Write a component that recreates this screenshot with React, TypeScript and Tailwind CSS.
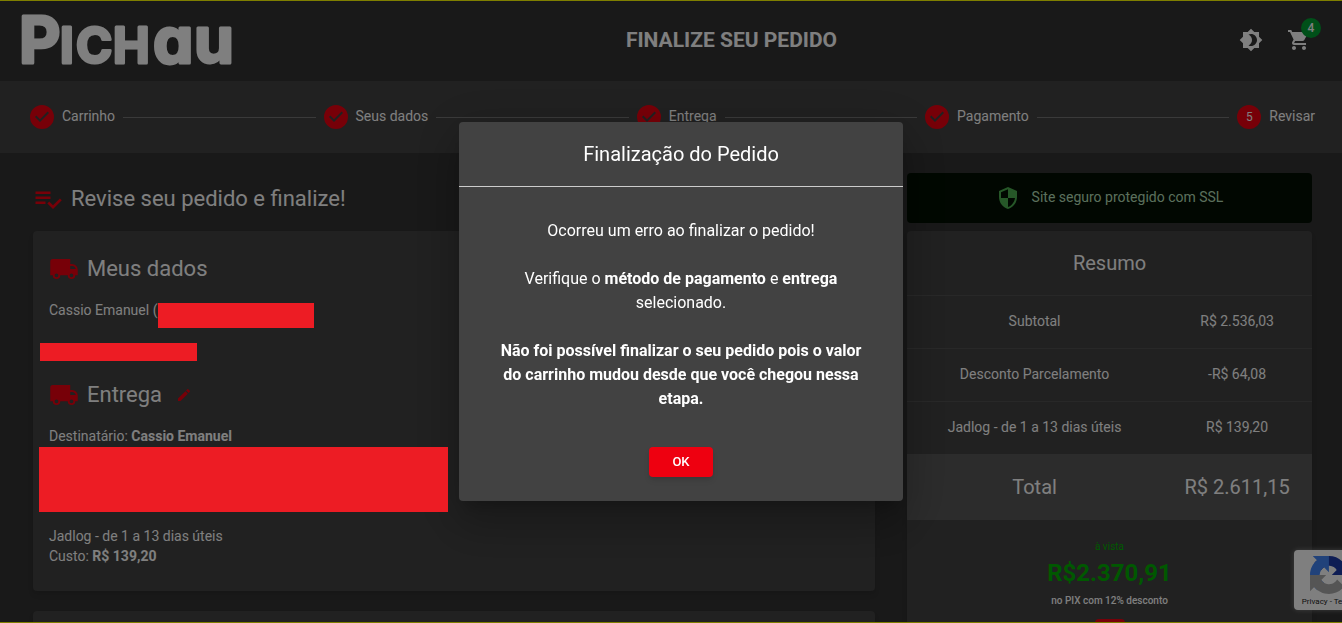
import React, { useState } from 'react';
import { MdBrightness4, MdEdit, MdSecurity, MdShoppingCart } from 'react-icons/md';

const steps = ['Carrinho', 'Seus dados', 'Entrega', 'Pagamento', 'Revisar'];

const summary = [
  { label: 'Subtotal', value: 'R$ 2.536,03' },
  { label: 'Desconto Parcelamento', value: '-R$ 64,08' },
  { label: 'Jadlog - de 1 a 13 dias úteis', value: 'R$ 139,20' },
];

function Logo() {
  return (
    <svg
      className="h-[84px] w-[220px]"
      viewBox="0 0 220 84"
      fill="#fff"
      stroke="#fff"
      strokeWidth="3"
      strokeLinejoin="round"
      style={{ fontFamily: 'Inter', fontWeight: 650, fontFeatureSettings: '"cv11"' }}
      role="img"
      aria-label="Pichau"
    >
      <text y="65">
        <tspan x="3" fontSize="64">P</tspan>
        <tspan x="44 60 97" fontSize="49">ICH</tspan>
        <tspan x="137 178" fontSize="64">au</tspan>
      </text>
    </svg>
  );
}

function StepCheck() {
  return (
    <svg className="w-6 h-6 text-[#ee0010]" viewBox="0 0 24 24" fill="currentColor" aria-hidden="true">
      <path d="M12 0a12 12 0 1 0 0 24 12 12 0 0 0 0-24zm-2 17l-5-5 1.4-1.4 3.6 3.6 7.6-7.6L19 8l-9 9z" />
    </svg>
  );
}

function ListCheck() {
  return (
    <svg className="w-[30px] h-[30px] text-[#ee0010]" viewBox="0 0 24 24" fill="currentColor" aria-hidden="true">
      <path d="M14 10H2v2h12v-2zm0-4H2v2h12V6zM2 16h8v-2H2v2zm19.5-4.5L23 13l-6.99 7-4.51-4.5L13 14l3.01 3 5.49-5.5z" />
    </svg>
  );
}

function Truck() {
  return (
    <svg className="w-[30px] h-[30px] text-[#ee0010]" viewBox="0 0 24 24" fill="currentColor" fillRule="evenodd" aria-hidden="true">
      <path d="M3 4h14v4h1.5A4.5 4.5 0 0 1 23 12.5V17h-2a3 3 0 0 1-6 0H9a3 3 0 0 1-6 0H1V6a2 2 0 0 1 2-2zm14 5.5V12h4.4a3.2 3.2 0 0 0-2.9-2.5H17zM6 15.5a1.5 1.5 0 1 0 0 3 1.5 1.5 0 0 0 0-3zm12 0a1.5 1.5 0 1 0 0 3 1.5 1.5 0 0 0 0-3z" />
    </svg>
  );
}

function CaptchaLogo() {
  return (
    <svg className="w-[38px] h-[38px]" viewBox="0 0 64 64" aria-hidden="true">
      <path fill="#1c3aa9" d="M64 31.955l-.033-1.37V4.687l-7.16 7.16C50.948 4.674 42.033.093 32.05.093c-10.4 0-19.622 4.96-25.458 12.64l11.736 11.86a15.55 15.55 0 0 1 4.754-5.334c2.05-1.6 4.952-2.906 8.968-2.906.485 0 .86.057 1.135.163 4.976.393 9.288 3.14 11.828 7.124l-8.307 8.307L64 31.953" />
      <path fill="#4285f4" d="M31.862.094l-1.37.033H4.594l7.16 7.16C4.58 13.147 0 22.06 0 32.046c0 10.4 4.96 19.622 12.64 25.458L24.5 45.768a15.55 15.55 0 0 1-5.334-4.754c-1.6-2.05-2.906-4.952-2.906-8.968 0-.485.057-.86.163-1.135.393-4.976 3.14-9.288 7.124-11.828l8.307 8.307L31.86.095" />
      <path fill="#ababab" d="M.001 32.045l.033 1.37v25.898l7.16-7.16c5.86 7.173 14.774 11.754 24.76 11.754 10.4 0 19.622-4.96 25.458-12.64l-11.736-11.86a15.55 15.55 0 0 1-4.754 5.334c-2.05 1.6-4.952 2.906-8.968 2.906-.485 0-.86-.057-1.135-.163-4.976-.393-9.288-3.14-11.828-7.124l8.307-8.307c-10.522.04-22.4.066-27.295-.005" />
    </svg>
  );
}

export default function App() {
  const [open, setOpen] = useState(true);

  return (
    <div className="relative h-screen overflow-hidden bg-[#323232] border-y border-[#ffff00] text-white text-sm font-['Roboto',sans-serif]">
      {/* Header */}
      <header className="h-20 pl-4 pr-[19px] pb-0.5 flex items-center justify-between">
        <a href="#" aria-label="Pichau">
          <Logo />
        </a>
        <h1 className="text-[21px] font-bold uppercase">Finalize seu pedido</h1>
        <div className="flex">
          <button className="w-12 h-12 flex items-center justify-center" aria-label="Alternar tema">
            <MdBrightness4 className="w-6 h-6" />
          </button>
          <button className="relative w-12 h-12 flex items-center justify-center" aria-label="Carrinho">
            <MdShoppingCart className="w-6 h-6" />
            <span className="absolute top-0.5 right-0.5 w-5 h-5 rounded-full bg-[#00a032] text-xs font-medium leading-5 text-center">
              4
            </span>
          </button>
        </div>
      </header>

      {/* Checkout steps */}
      <ol className="h-[72px] pl-[30px] pr-[27px] flex items-center gap-2 bg-[#424242]">
        {steps.map((step, i) => (
          <React.Fragment key={step}>
            {i > 0 && <li className="flex-1 h-px bg-[#757575]" aria-hidden="true" />}
            <li className="flex items-center gap-2">
              {i < steps.length - 1 ? (
                <StepCheck />
              ) : (
                <span className="w-6 h-6 rounded-full bg-[#ee0010] text-xs leading-6 text-center">{i + 1}</span>
              )}
              <span className="pb-0.5">{step}</span>
            </li>
          </React.Fragment>
        ))}
      </ol>

      {/* Content */}
      <main className="pt-5 pl-[17px] pr-[14px] flex items-start">
        <div className="w-2/3 px-4">
          <h2 className="h-[52px] mb-1.5 flex items-center gap-2 text-[22px]">
            <ListCheck />
            Revise seu pedido e finalize!
          </h2>

          <section className="mb-5 px-4 pt-[22px] pb-[25px] rounded bg-[#424242] shadow-md">
            <h3 className="h-8 flex items-center gap-2 text-[22px]">
              <Truck />
              Meus dados
            </h3>
            <div className="mt-[15px] flex items-start gap-px">
              <span>Cassio Emanuel (</span>
              <span className="relative z-20 mt-[3px] w-[156px] h-[25px] bg-[#ed1c24]" />
            </div>
            <div className="relative z-20 mt-[15px] -ml-[9px] w-[157px] h-[18px] bg-[#ed1c24]" />

            <h3 className="mt-[18px] h-8 flex items-center gap-2 text-[22px]">
              <Truck />
              Entrega
              <button className="p-1.5 text-[#ee0010]" aria-label="Editar entrega">
                <MdEdit className="w-4 h-4" />
              </button>
            </h3>
            <p className="mt-[15px]">
              Destinatário: <b>Cassio Emanuel</b>
            </p>
            <div className="relative z-20 mt-px mb-[14px] -ml-[10px] w-[409px] h-[65px] bg-[#ed1c24]" />
            <p>Jadlog - de 1 a 13 dias úteis</p>
            <p>
              Custo: <b>R$ 139,20</b>
            </p>
          </section>

          <section className="h-40 rounded bg-[#424242] shadow-md" />
        </div>

        <aside className="w-1/3 px-4">
          <div className="h-[50px] mb-2 flex items-center justify-center gap-3 rounded bg-[#020f02] text-[#b7dfb9]">
            <MdSecurity className="w-6 h-6 text-[#4caf50]" />
            <span className="pb-0.5">Site seguro protegido com SSL</span>
          </div>

          <section className="rounded bg-[#424242] shadow-md text-center">
            <h2 className="h-16 flex items-center justify-center text-xl">Resumo</h2>
            <table className="w-full table-fixed border-separate border-spacing-0">
              <tbody>
                {summary.map((row) => (
                  <tr key={row.label} className="h-[53px]">
                    <th className="w-[63%] pb-0.5 border-t border-[#515151] font-normal">{row.label}</th>
                    <td className="pb-0.5 border-t border-[#515151]">{row.value}</td>
                  </tr>
                ))}
                <tr className="h-[66px] bg-[#585858] text-xl">
                  <th className="font-normal">Total</th>
                  <td>R$ 2.611,15</td>
                </tr>
              </tbody>
            </table>
            <div className="pt-[19px] pb-20">
              <p className="text-[10px] leading-4 text-[#00b000]">à vista</p>
              <p className="text-2xl leading-9 font-bold text-[#00b000]">R$2.370,91</p>
              <p className="text-[10px] leading-5 font-medium">no PIX com 12% desconto</p>
              <div className="mx-auto mt-2 w-[30px] h-[30px] rounded bg-[#ee0010]" />
            </div>
          </section>
        </aside>
      </main>

      {/* reCAPTCHA badge */}
      <div className="absolute bottom-3 -right-[22px] w-[70px] h-[60px] pt-1.5 flex flex-col items-center rounded-sm bg-white text-[#222222] shadow-[0_0_5px_gray]">
        <CaptchaLogo />
        <span className="text-[8px] leading-4 whitespace-nowrap">Privacy - Terms</span>
      </div>

      {/* Error dialog */}
      {open && (
        <div className="fixed inset-0 z-10 pl-5 flex items-center justify-center bg-black/50">
          <div
            role="dialog"
            aria-labelledby="dialog-title"
            className="w-[444px] rounded bg-[#424242] text-center shadow-[0_11px_15px_-7px_rgba(0,0,0,0.2),0_24px_38px_3px_rgba(0,0,0,0.14),0_9px_46px_8px_rgba(0,0,0,0.12)]"
          >
            <h2 id="dialog-title" className="h-[65px] flex items-center justify-center border-b border-[#cccccc] text-xl">
              Finalização do Pedido
            </h2>
            <div className="px-8 pt-8 pb-6 text-base">
              <p>Ocorreu um erro ao finalizar o pedido!</p>
              <p className="mt-6">
                Verifique o <b>método de pagamento</b> e <b>entrega</b> selecionado.
              </p>
              <p className="mt-6 font-bold">
                Não foi possível finalizar o seu pedido pois o valor do carrinho mudou desde que você chegou nessa etapa.
              </p>
              <button
                onClick={() => setOpen(false)}
                className="mt-9 w-16 h-[30px] block mx-auto rounded bg-[#ee0010] text-[13px] font-medium shadow-md"
              >
                OK
              </button>
            </div>
          </div>
        </div>
      )}
    </div>
  );
}
